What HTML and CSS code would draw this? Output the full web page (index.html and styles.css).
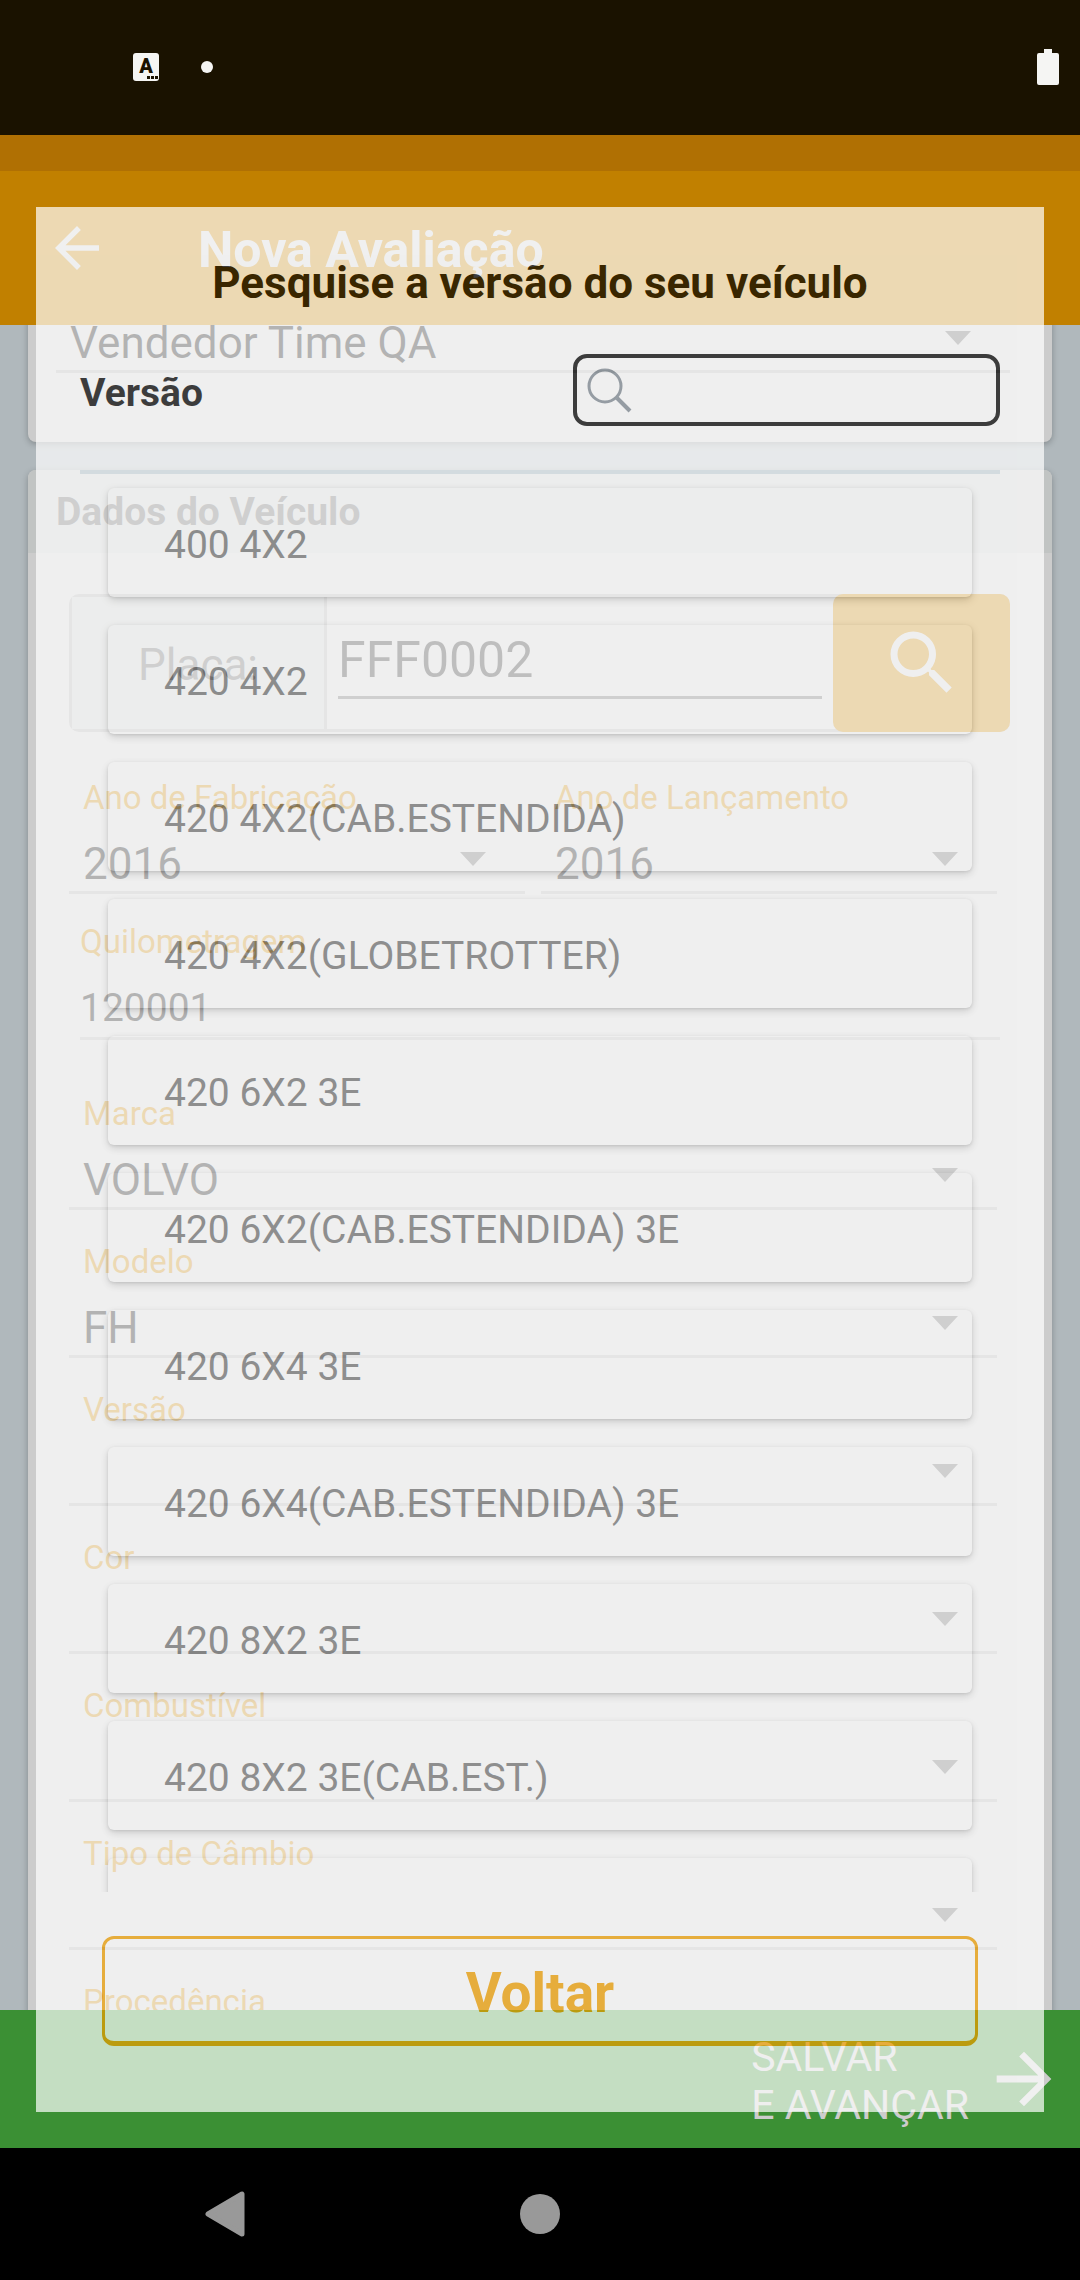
FILE: index.html
```html
<!DOCTYPE html>
<html lang="pt-BR">
<head>
<meta charset="utf-8">
<meta name="viewport" content="width=device-width, initial-scale=1">
<title>Nova Avaliação</title>
<link rel="stylesheet" href="styles.css">
</head>
<body>
<div class="status-bar">
  <div class="status-icons">
    <svg width="26" height="28" viewBox="0 0 26 28" aria-hidden="true">
      <rect width="26" height="28" rx="3" fill="#f5f5f3"/>
      <text class="status-letter" x="13" y="20" text-anchor="middle">A</text>
      <path d="M14 23h3v3h-3zM18 23h3v3h-3zM22 23h3v3h-3z" fill="#1a1200"/>
    </svg>
    <svg width="12" height="12" viewBox="0 0 12 12" aria-hidden="true"><circle cx="6" cy="6" r="6" fill="#f5f5f3"/></svg>
  </div>
  <svg width="22" height="36" viewBox="0 0 22 36" aria-hidden="true">
    <path d="M7 0h8v4h5a2 2 0 0 1 2 2v28a2 2 0 0 1-2 2H2a2 2 0 0 1-2-2V6a2 2 0 0 1 2-2h5z" fill="#f5f5f3"/>
  </svg>
</div>

<div class="app">
  <div class="app-strip"></div>
  <header class="app-bar">
    <button class="icon-button" type="button" aria-label="Voltar">
      <svg width="66" height="66" viewBox="0 0 24 24" aria-hidden="true"><path d="M20 11H7.83l5.59-5.59L12 4l-8 8 8 8 1.41-1.41L7.83 13H20z" fill="#fff"/></svg>
    </button>
    <h1 class="app-title">Nova Avaliação</h1>
  </header>

  <main class="content">
    <section class="card card-seller">
      <div class="field">
        <div class="select-box">
          <select class="select" aria-label="Vendedor"><option>Vendedor Time QA</option></select>
        </div>
      </div>
    </section>

    <section class="card">
      <h2 class="card-title">Dados do Veículo</h2>
      <div class="card-body">
        <div class="plate">
          <label class="plate-label" for="placa">Placa:</label>
          <div class="plate-entry"><input class="plate-input" id="placa" type="text" value="FFF0002"></div>
          <button class="plate-search" type="button" aria-label="Pesquisar placa">
            <svg width="84" height="84" viewBox="0 0 24 24" aria-hidden="true"><path d="M15.5 14h-.79l-.28-.27A6.47 6.47 0 0 0 16 9.5 6.5 6.5 0 1 0 9.5 16c1.61 0 3.09-.59 4.23-1.57l.27.28v.79l5 4.99L20.49 19zm-6 0a4.5 4.5 0 1 1 0-9 4.5 4.5 0 0 1 0 9z" fill="#fff"/></svg>
          </button>
        </div>

        <div class="field-pair">
          <div class="field">
            <label class="label" for="fabricacao">Ano de Fabricação</label>
            <div class="select-box"><select class="select" id="fabricacao"><option>2016</option></select></div>
          </div>
          <div class="field">
            <label class="label" for="lancamento">Ano de Lançamento</label>
            <div class="select-box"><select class="select" id="lancamento"><option>2016</option></select></div>
          </div>
        </div>

        <div class="mileage">
          <label class="mileage-label" for="km">Quilometragem</label>
          <input class="mileage-input" id="km" type="text" value="120001">
        </div>

        <div class="field-list">
          <div class="field">
            <label class="label" for="marca">Marca</label>
            <div class="select-box"><select class="select" id="marca"><option>VOLVO</option></select></div>
          </div>
          <div class="field">
            <label class="label" for="modelo">Modelo</label>
            <div class="select-box"><select class="select" id="modelo"><option>FH</option></select></div>
          </div>
          <div class="field">
            <label class="label" for="versao">Versão</label>
            <div class="select-box"><select class="select" id="versao"></select></div>
          </div>
          <div class="field">
            <label class="label" for="cor">Cor</label>
            <div class="select-box"><select class="select" id="cor"></select></div>
          </div>
          <div class="field">
            <label class="label" for="combustivel">Combustível</label>
            <div class="select-box"><select class="select" id="combustivel"></select></div>
          </div>
          <div class="field">
            <label class="label" for="cambio">Tipo de Câmbio</label>
            <div class="select-box"><select class="select" id="cambio"></select></div>
          </div>
          <div class="field">
            <label class="label" for="procedencia">Procedência</label>
            <div class="select-box"><select class="select" id="procedencia"></select></div>
          </div>
        </div>
      </div>
    </section>
  </main>

  <button class="save-bar" type="button">
    <span class="save-text">SALVAR<br>E AVANÇAR</span>
    <svg width="82" height="82" viewBox="0 0 24 24" aria-hidden="true"><path d="M12 4l-1.41 1.41L16.17 11H4v2h12.17l-5.58 5.59L12 20l8-8z" fill="#fff"/></svg>
  </button>

  <div class="backdrop"></div>

  <div class="dialog" role="dialog" aria-labelledby="dialog-title">
    <h2 class="dialog-title" id="dialog-title">Pesquise a versão do seu veículo</h2>
    <div class="search-row">
      <label class="search-label" for="busca">Versão</label>
      <div class="search-box">
        <svg width="48" height="48" viewBox="0 0 48 48" fill="none" stroke="#7f8992" aria-hidden="true">
          <circle cx="20" cy="20" r="16" stroke-width="3"/>
          <path d="M32 32l13 13" stroke-width="4"/>
        </svg>
        <input class="search-input" id="busca" type="text">
      </div>
    </div>
    <ul class="versions">
      <li><button class="version" type="button">400 4X2</button></li>
      <li><button class="version" type="button">420 4X2</button></li>
      <li><button class="version" type="button">420 4X2(CAB.ESTENDIDA)</button></li>
      <li><button class="version" type="button">420 4X2(GLOBETROTTER)</button></li>
      <li><button class="version" type="button">420 6X2 3E</button></li>
      <li><button class="version" type="button">420 6X2(CAB.ESTENDIDA) 3E</button></li>
      <li><button class="version" type="button">420 6X4 3E</button></li>
      <li><button class="version" type="button">420 6X4(CAB.ESTENDIDA) 3E</button></li>
      <li><button class="version" type="button">420 8X2 3E</button></li>
      <li><button class="version" type="button">420 8X2 3E(CAB.EST.)</button></li>
      <li><button class="version" type="button"></button></li>
    </ul>
    <div class="dialog-actions">
      <button class="back-button" type="button">Voltar</button>
    </div>
  </div>
</div>

<nav class="nav-bar">
  <button class="nav-button" type="button" aria-label="Anterior">
    <svg width="40" height="46" viewBox="0 0 40 46" aria-hidden="true"><path d="M3 23L37 3v40z" fill="#999" stroke="#999" stroke-width="5" stroke-linejoin="round"/></svg>
  </button>
  <button class="nav-button" type="button" aria-label="Início">
    <svg width="42" height="42" viewBox="0 0 42 42" aria-hidden="true"><circle cx="21" cy="21" r="20" fill="#999"/></svg>
  </button>
</nav>
</body>
</html>
```
FILE: styles.css
```css
* {
  box-sizing: border-box;
}

body {
  margin: 0;
  height: 100vh;
  display: flex;
  flex-direction: column;
  font-family: Roboto, "Liberation Sans", sans-serif;
  background: #000;
}

h1,
h2,
ul {
  margin: 0;
  padding: 0;
}

button,
input,
select {
  margin: 0;
  padding: 0;
  border: 0;
  border-radius: 0;
  outline: 0;
  background: none;
  font-family: inherit;
  appearance: none;
}

svg {
  display: block;
  flex: none;
}

/* System status bar */
.status-bar {
  flex: none;
  height: 135px;
  padding: 0 21px 2px 133px;
  display: flex;
  align-items: center;
  justify-content: space-between;
  background: #1a1200;
}

.status-icons {
  display: flex;
  align-items: center;
  gap: 42px;
}

.status-letter {
  font-size: 20px;
  font-weight: 900;
  fill: #1a1200;
}

/* App screen */
.app {
  position: relative;
  flex: 1;
  min-height: 0;
  display: flex;
  flex-direction: column;
  background: #dce6eb;
}

.app-strip {
  flex: none;
  height: 36px;
  background: #dd8d04;
}

.app-bar {
  flex: none;
  height: 154px;
  padding-left: 44px;
  display: flex;
  align-items: center;
  gap: 88px;
  background: #f2a000;
}

.app-title {
  padding-top: 4px;
  color: #fff;
  font-size: 50px;
  line-height: 60px;
  font-weight: 700;
}

.content {
  flex: 1;
  min-height: 0;
  padding: 0 28px;
  display: flex;
  flex-direction: column;
  gap: 28px;
  overflow: hidden;
}

.card {
  flex: none;
  border-radius: 8px;
  overflow: hidden;
  background: #fff;
  box-shadow: 0 2px 6px rgba(0, 0, 0, 0.25);
}

.card-seller {
  margin-top: -28px;
  padding: 0 42px 69px 28px;
}

.card-title {
  height: 83px;
  padding: 2px 0 0 28px;
  background: #f2f5f4;
  color: #777;
  font-size: 39px;
  line-height: 81px;
  font-weight: 700;
}

.card-body {
  padding: 41px 42px 42px 41px;
}

.plate {
  height: 138px;
  display: flex;
  border: 3px solid #d3d3d3;
  border-right: 0;
  border-radius: 10px;
}

.plate-label {
  width: 255px;
  padding: 4px 0 0 66px;
  border-right: 3px solid #d3d3d3;
  background: #f2f5f4;
  color: #777;
  font-size: 44px;
  line-height: 128px;
}

.plate-entry {
  flex: 1;
  padding: 24px 11px 0;
}

.plate-input {
  width: 100%;
  height: 78px;
  padding-top: 3px;
  border-bottom: 3px solid #777;
  color: #303030;
  font-size: 50px;
}

.plate-search {
  flex: none;
  width: 177px;
  margin: -3px 0;
  display: flex;
  align-items: center;
  justify-content: center;
  border-radius: 10px;
  background: #f2a000;
}

.field-pair {
  margin: 46px 13px 0 0;
  display: grid;
  grid-template-columns: 1fr 1fr;
  gap: 16px;
}

.label,
.mileage-label {
  display: block;
  color: #f2a000;
  font-size: 33px;
  line-height: 40px;
}

.label {
  padding-left: 14px;
}

.select-box {
  position: relative;
}

.select-box::after {
  content: "";
  position: absolute;
  top: 34px;
  right: 39px;
  width: 26px;
  height: 14px;
  background: #777;
  clip-path: polygon(0 0, 100% 0, 50% 100%);
}

.select {
  display: block;
  width: 100%;
  height: 76px;
  padding: 18px 80px 0 14px;
  border-bottom: 3px solid #d3d3d3;
  color: #000;
  font-size: 44px;
}

.mileage {
  margin: 28px 10px 54px 11px;
}

.mileage-input {
  display: block;
  width: 100%;
  height: 78px;
  padding-top: 16px;
  border-bottom: 3px solid #d8d8d8;
  color: #000;
  font-size: 39px;
}

.field-list {
  margin-right: 13px;
  display: flex;
  flex-direction: column;
  gap: 32px;
}

.save-bar {
  flex: none;
  height: 138px;
  padding-right: 15px;
  display: flex;
  align-items: center;
  justify-content: flex-end;
  gap: 14px;
  background: #4ab441;
  color: #fff;
  font-size: 41px;
  line-height: 48px;
  text-align: left;
}

.save-text {
  padding-top: 3px;
}

.backdrop {
  position: absolute;
  inset: 0;
  background: rgba(0, 0, 0, 0.2);
}

/* Version search dialog */
.dialog {
  position: absolute;
  inset: 72px 36px 36px;
  display: flex;
  flex-direction: column;
  background: #fff;
  opacity: 0.7;
}

.dialog-title {
  padding: 50px 36px 45px;
  color: #000;
  font-size: 44px;
  line-height: 52px;
  font-weight: 700;
  text-align: center;
}

.search-row {
  margin: 0 44px;
  padding-bottom: 44px;
  display: flex;
  align-items: center;
  justify-content: space-between;
  border-bottom: 4px solid #dce6eb;
}

.search-label {
  padding-top: 6px;
  color: #000;
  font-size: 39px;
  line-height: 48px;
  font-weight: 700;
}

.search-box {
  width: 427px;
  height: 72px;
  padding: 0 8px;
  display: flex;
  align-items: center;
  border: 4px solid #000;
  border-radius: 14px;
}

.search-input {
  flex: 1;
  min-width: 0;
  height: 64px;
  font-size: 39px;
}

.versions {
  flex: 1;
  min-height: 0;
  padding: 14px 72px 0;
  display: flex;
  flex-direction: column;
  gap: 28px;
  list-style: none;
  overflow: hidden;
}

.version {
  display: block;
  width: 100%;
  height: 109px;
  padding: 4px 56px 0;
  border-radius: 6px;
  background: #fff;
  box-shadow: 0 3px 8px rgba(0, 0, 0, 0.2), 0 1px 3px rgba(0, 0, 0, 0.12);
  color: #757575;
  font-size: 39px;
  text-align: left;
}

.dialog-actions {
  padding: 44px 66px 66px;
}

.back-button {
  display: block;
  width: 100%;
  height: 110px;
  padding-top: 6px;
  border: 3px solid #f2a000;
  border-bottom-width: 5px;
  border-radius: 12px;
  color: #f2a000;
  font-size: 55px;
  font-weight: 700;
}

/* System navigation bar */
.nav-bar {
  flex: none;
  height: 132px;
  padding: 0 68px;
  display: grid;
  grid-template-columns: repeat(3, 1fr);
  background: #000;
}

.nav-button {
  display: flex;
  align-items: center;
  justify-content: center;
}
```
